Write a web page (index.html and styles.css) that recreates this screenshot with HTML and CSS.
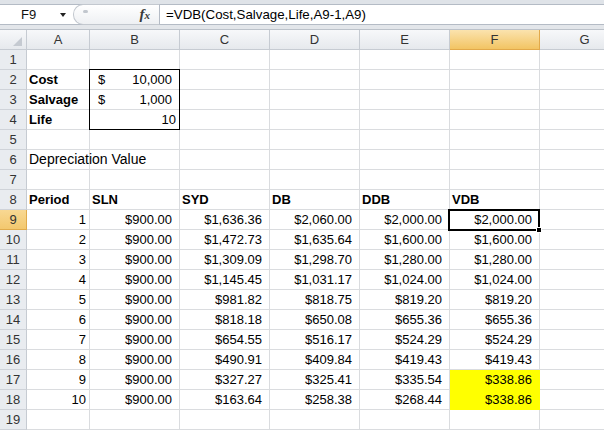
FILE: index.html
```html
<!DOCTYPE html>
<html>
<head>
<meta charset="utf-8">
<link rel="stylesheet" href="styles.css">
</head>
<body>
<div class="app">
  <div class="edge"></div>
  <div class="fbar">
    <div class="namebox"><span class="ref">F9</span><span class="drop"></span></div>
    <div class="fxzone"><span class="grip"></span><span class="fx">f<span class="fx-x">x</span></span></div>
    <div class="formula">=VDB(Cost,Salvage,Life,A9-1,A9)</div>
  </div>
  <div class="band"></div>
  <div class="sheet">
    <div class="h corner"><span class="tri"></span></div>
    <div class="h">A</div><div class="h">B</div><div class="h">C</div><div class="h">D</div><div class="h">E</div><div class="h hs">F</div><div class="h">G</div>

    <div class="h rh">1</div><div class="c"></div><div class="c"></div><div class="c"></div><div class="c"></div><div class="c"></div><div class="c"></div><div class="c"></div>

    <div class="h rh">2</div><div class="c b">Cost</div><div class="c acct"><span>$</span><span>10,000</span></div><div class="c"></div><div class="c"></div><div class="c"></div><div class="c"></div><div class="c"></div>
    <div class="h rh">3</div><div class="c b">Salvage</div><div class="c acct"><span>$</span><span>1,000</span></div><div class="c"></div><div class="c"></div><div class="c"></div><div class="c"></div><div class="c"></div>
    <div class="h rh">4</div><div class="c b">Life</div><div class="c r">10</div><div class="c"></div><div class="c"></div><div class="c"></div><div class="c"></div><div class="c"></div>
    <div class="h rh">5</div><div class="c"></div><div class="c"></div><div class="c"></div><div class="c"></div><div class="c"></div><div class="c"></div><div class="c"></div>
    <div class="h rh">6</div><div class="c over">Depreciation Value</div><div class="c"></div><div class="c"></div><div class="c"></div><div class="c"></div><div class="c"></div><div class="c"></div>
    <div class="h rh">7</div><div class="c"></div><div class="c"></div><div class="c"></div><div class="c"></div><div class="c"></div><div class="c"></div><div class="c"></div>
    <div class="h rh">8</div><div class="c b">Period</div><div class="c b">SLN</div><div class="c b">SYD</div><div class="c b">DB</div><div class="c b">DDB</div><div class="c b">VDB</div><div class="c"></div>

    <div class="h rh rs">9</div><div class="c r">1</div><div class="c cur">$900.00</div><div class="c cur">$1,636.36</div><div class="c cur">$2,060.00</div><div class="c cur">$2,000.00</div><div class="c cur">$2,000.00</div><div class="c"></div>
    <div class="h rh">10</div><div class="c r">2</div><div class="c cur">$900.00</div><div class="c cur">$1,472.73</div><div class="c cur">$1,635.64</div><div class="c cur">$1,600.00</div><div class="c cur">$1,600.00</div><div class="c"></div>
    <div class="h rh">11</div><div class="c r">3</div><div class="c cur">$900.00</div><div class="c cur">$1,309.09</div><div class="c cur">$1,298.70</div><div class="c cur">$1,280.00</div><div class="c cur">$1,280.00</div><div class="c"></div>
    <div class="h rh">12</div><div class="c r">4</div><div class="c cur">$900.00</div><div class="c cur">$1,145.45</div><div class="c cur">$1,031.17</div><div class="c cur">$1,024.00</div><div class="c cur">$1,024.00</div><div class="c"></div>
    <div class="h rh">13</div><div class="c r">5</div><div class="c cur">$900.00</div><div class="c cur">$981.82</div><div class="c cur">$818.75</div><div class="c cur">$819.20</div><div class="c cur">$819.20</div><div class="c"></div>
    <div class="h rh">14</div><div class="c r">6</div><div class="c cur">$900.00</div><div class="c cur">$818.18</div><div class="c cur">$650.08</div><div class="c cur">$655.36</div><div class="c cur">$655.36</div><div class="c"></div>
    <div class="h rh">15</div><div class="c r">7</div><div class="c cur">$900.00</div><div class="c cur">$654.55</div><div class="c cur">$516.17</div><div class="c cur">$524.29</div><div class="c cur">$524.29</div><div class="c"></div>
    <div class="h rh">16</div><div class="c r">8</div><div class="c cur">$900.00</div><div class="c cur">$490.91</div><div class="c cur">$409.84</div><div class="c cur">$419.43</div><div class="c cur">$419.43</div><div class="c"></div>
    <div class="h rh">17</div><div class="c r">9</div><div class="c cur">$900.00</div><div class="c cur">$327.27</div><div class="c cur">$325.41</div><div class="c cur">$335.54</div><div class="c cur hl">$338.86</div><div class="c"></div>
    <div class="h rh">18</div><div class="c r">10</div><div class="c cur">$900.00</div><div class="c cur">$163.64</div><div class="c cur">$258.38</div><div class="c cur">$268.44</div><div class="c cur hl">$338.86</div><div class="c"></div>
    <div class="h rh">19</div><div class="c"></div><div class="c"></div><div class="c"></div><div class="c"></div><div class="c"></div><div class="c"></div><div class="c"></div>

    <div class="inputbox"></div>
    <div class="selbox"></div>
    <div class="handle"></div>
  </div>
</div>
</body>
</html>
```

FILE: styles.css
```css
html, body {
  margin: 0;
  padding: 0;
  background: #ffffff;
}
body {
  font-family: "Liberation Sans", Arial, sans-serif;
  font-size: 13px;
  color: #000;
}
.app {
  width: 604px;
  height: 430px;
  overflow: hidden;
  background: #ffffff;
}
.edge {
  height: 4px;
  background: #dfe3e8;
  border-bottom: 1px solid #b4bbc5;
}
.fbar {
  display: flex;
  height: 19px;
  background: #ffffff;
  border-bottom: 1px solid #b4bbc5;
}
.namebox {
  width: 73px;
  flex: none;
  display: flex;
  align-items: center;
  padding-left: 21px;
  box-sizing: border-box;
  font-size: 13px;
  color: #111;
}
.namebox .ref {
  width: 39px;
}
.drop {
  width: 0;
  height: 0;
  border-left: 3.5px solid transparent;
  border-right: 3.5px solid transparent;
  border-top: 4px solid #222;
  margin-top: 1px;
}
.fxzone {
  width: 87px;
  flex: none;
  box-sizing: border-box;
  display: flex;
  align-items: center;
  justify-content: space-between;
  padding: 0 9px 0 9px;
  background: linear-gradient(#ffffff, #eef0f3);
  border: 1px solid #c3c8cf;
  border-right-color: #b4bbc5;
  border-radius: 10px 0 0 10px;
  margin-top: -1px;
  height: 21px;
}
.grip {
  width: 5px;
  height: 3px;
  border-radius: 2px;
  background: #c2c7ce;
  margin-top: -6px;
}
.fx {
  font-family: "Liberation Serif", "Times New Roman", serif;
  font-style: italic;
  font-weight: bold;
  font-size: 15px;
  color: #3a3a3a;
  line-height: 1;
}
.fx-x {
  font-size: 11px;
}
.formula {
  flex: 1;
  display: flex;
  align-items: center;
  padding-left: 6px;
  font-size: 13.3px;
  white-space: nowrap;
  color: #000;
}
.band {
  height: 4px;
  background: #e3e6ea;
  border-bottom: 1px solid #bcc2ca;
}
.sheet {
  position: relative;
  display: grid;
  grid-template-columns: 27px 63px repeat(6, 90px);
  grid-auto-rows: 20px;
  width: 630px;
}
.h {
  box-sizing: border-box;
  background: linear-gradient(#f7f8fa, #e6e9ed);
  border-right: 1px solid #c6cbd2;
  border-bottom: 1px solid #c6cbd2;
  display: flex;
  align-items: center;
  justify-content: center;
  color: #333;
  font-size: 13px;
}
.h.hs {
  background: linear-gradient(#fbe3ae, #f2c463);
  border-right-color: #e2a94a;
  border-bottom-color: #e2a94a;
}
.rh {
  align-items: flex-end;
  padding-bottom: 2px;
  background: #e9ecf0;
  border-bottom-color: #cfd3d9;
}
.rh.rs {
  background: linear-gradient(#f8d893, #f3c86e);
  border-bottom-color: #e0ab4c;
  border-right-color: #e0ab4c;
}
.corner {
  position: relative;
}
.tri {
  position: absolute;
  right: 4px;
  bottom: 3px;
  width: 0;
  height: 0;
  border-left: 9px solid transparent;
  border-bottom: 9px solid #c5cad1;
}
.c {
  box-sizing: border-box;
  border-right: 1px solid #dadcdf;
  border-bottom: 1px solid #dadcdf;
  display: flex;
  align-items: flex-end;
  padding: 0 3px 2px 2px;
  white-space: nowrap;
  line-height: 15px;
  min-width: 0;
}
.c.b {
  font-weight: bold;
}
.c.r {
  justify-content: flex-end;
}
.c.cur {
  justify-content: flex-end;
  padding-right: 7px;
}
.c.acct {
  justify-content: space-between;
  padding: 0 7px 2px 8px;
}
.c.over {
  overflow: visible;
  font-size: 14px;
}
.c.hl {
  background: #ffff00;
  border-right-color: #ffff00;
  border-bottom-color: #ffff00;
}
.inputbox {
  position: absolute;
  left: 89px;
  top: 39px;
  width: 91px;
  height: 61px;
  box-sizing: border-box;
  border: 1px solid #000;
}
.selbox {
  position: absolute;
  left: 448px;
  top: 179px;
  width: 92px;
  height: 22px;
  box-sizing: border-box;
  border: 2px solid #000;
}
.handle {
  position: absolute;
  left: 536px;
  top: 197px;
  width: 6px;
  height: 6px;
  box-sizing: border-box;
  background: #000;
  border: 1px solid #fff;
}
```
